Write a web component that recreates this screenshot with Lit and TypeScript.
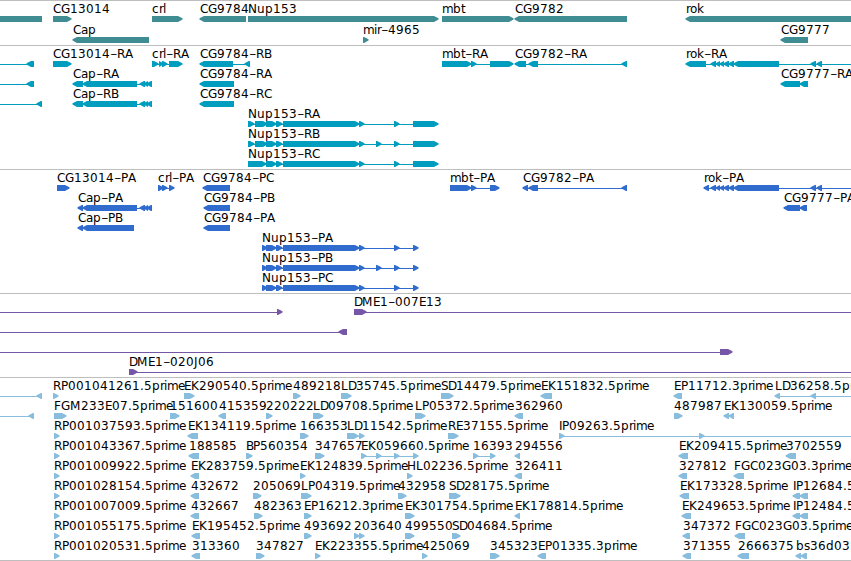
import { LitElement, html, svg, css } from 'lit';
import { customElement, property } from 'lit/decorators.js';

type Strand = '+' | '-';
type Block = [number, number];

interface Feature {
  label: string;
  strand: Strand;
  blocks: Block[];
  /** extent of the connecting line, when it runs past the outer blocks */
  line?: Block;
}

interface Track {
  name: string;
  rows: Feature[][];
}

const WIDTH = 851;
const EDGE = 860;
const HEAD = 5;

// Whole pixel advances for the 12px label font.
const ADVANCES: Record<string, number> = {
  A: 8, B: 7, C: 8, D: 8, E: 7, F: 7, G: 9, H: 9, I: 3, J: 4, K: 8, L: 7, M: 11, N: 9, P: 7, R: 8, S: 7,
  a: 7, b: 8, c: 7, d: 8, e: 7, i: 3, k: 7, l: 3, m: 11, o: 7, p: 8, r: 4, s: 6, t: 4, u: 8, '.': 4, '-': 7,
};

const fwd = (label: string, blocks: Block[], line?: Block): Feature => ({ label, strand: '+', blocks, line });
const rev = (label: string, blocks: Block[], line?: Block): Feature => ({ label, strand: '-', blocks, line });

const capTail: Block[] = [[140, 145], [144, 148], [147, 152]];
const rokMiddle: Block[] = [[711, 716], [716, 720], [720, 724], [724, 729], [729, 734], [734, 779], [811, 816], [817, 822]];
const nupMiddle: Block[] = [[266, 276], [276, 282], [283, 359], [359, 364]];

const tracks: Track[] = [
  {
    name: 'genes',
    rows: [
      [
        rev('', [[-10, 42]]),
        fwd('CG13014', [[53, 71]]),
        fwd('crl', [[152, 182]]),
        rev('CG9784', [[200, 246]]),
        fwd('Nup153', [[248, 438]]),
        fwd('mbt', [[442, 513]]),
        rev('CG9782', [[515, 627]]),
        rev('rok', [[686, EDGE]]),
      ],
      [rev('Cap', [[73, 149]]), fwd('mir-4965', [[363, 368]]), rev('CG9777', [[781, 808]])],
    ],
  },
  {
    name: 'transcripts',
    rows: [
      [
        rev('', [[27, 34]], [-10, 34]),
        fwd('CG13014-RA', [[53, 71]]),
        fwd('crl-RA', [[152, 158], [159, 163], [162, 167], [169, 182]]),
        rev('CG9784-RB', [[200, 233], [245, 250]]),
        fwd('mbt-RA', [[442, 471], [471, 476], [490, 513]]),
        rev('CG9782-RA', [[515, 526], [529, 538], [622, 627]]),
        rev('rok-RA', [[686, 706], ...rokMiddle], [686, EDGE]),
      ],
      [
        rev('', [[27, 34]], [-10, 34]),
        rev('Cap-RA', [[73, 83], [83, 137], ...capTail]),
        rev('CG9784-RA', [[200, 234]]),
        rev('CG9777-RA', [[781, 800], [800, 808]]),
      ],
      [
        rev('', [[37, 42]], [-10, 42]),
        rev('Cap-RB', [[73, 83], [83, 137], ...capTail]),
        rev('CG9784-RC', [[200, 234]]),
      ],
      [fwd('Nup153-RA', [[248, 254], [255, 267], ...nupMiddle, [394, 399], [413, 438]])],
      [fwd('Nup153-RB', [[248, 254], [255, 267], ...nupMiddle, [376, 381], [394, 399], [413, 438]])],
      [fwd('Nup153-RC', [[248, 266], ...nupMiddle, [394, 399], [413, 438]])],
    ],
  },
  {
    name: 'proteins',
    rows: [
      [
        fwd('CG13014-PA', [[57, 69]]),
        fwd('crl-PA', [[158, 163], [162, 167], [169, 174]]),
        rev('CG9784-PC', [[203, 230]]),
        fwd('mbt-PA', [[450, 471], [471, 476], [490, 499]]),
        rev('CG9782-PA', [[523, 528], [529, 538], [622, 627]]),
        rev('rok-PA', [[704, 709], ...rokMiddle], [704, EDGE]),
      ],
      [
        rev('Cap-PA', [[78, 83], [83, 137], ...capTail]),
        rev('CG9784-PB', [[204, 230]]),
        rev('CG9777-PA', [[784, 800], [800, 807]]),
      ],
      [rev('Cap-PB', [[78, 83], [83, 134]]), rev('CG9784-PA', [[204, 230]])],
      [fwd('Nup153-PA', [[262, 267], ...nupMiddle, [394, 399], [413, 418]])],
      [fwd('Nup153-PB', [[262, 267], ...nupMiddle, [376, 381], [394, 399], [413, 418]])],
      [fwd('Nup153-PC', [[262, 267], ...nupMiddle, [394, 399], [413, 418]])],
    ],
  },
  {
    name: 'bacs',
    rows: [
      [fwd('', [[277, 282]], [-10, 282]), fwd('DME1-007E13', [[354, 366]], [354, EDGE])],
      [rev('', [[339, 347]], [-10, 347])],
      [fwd('', [[720, 732]], [-10, 732])],
      [fwd('DME1-020J06', [[129, 137]], [129, EDGE])],
    ],
  },
  {
    name: 'ests',
    rows: [
      [
        rev('', [[37, 42]], [-10, 42]),
        fwd('RP001041261.5prime', [[53, 58]]),
        fwd('EK290540.5prime', [[184, 194]]),
        fwd('489218', [[293, 300]]),
        fwd('LD35745.5prime', [[341, 351]]),
        fwd('SD14479.5prime', [[441, 453]]),
        rev('EK151832.5prime', [[541, 552]]),
        rev('EP11712.3prime', [[674, 682]]),
        rev('LD36258.5prime', [[775, 780], [811, 816]], [775, EDGE]),
      ],
      [
        rev('', [[29, 34]], [-10, 34]),
        fwd('FGM233E07.5prime', [[54, 66]]),
        fwd('151600', [[170, 179]]),
        rev('415359', [[219, 226]]),
        fwd('220222', [[266, 272]]),
        fwd('LD09708.5prime', [[313, 323]]),
        fwd('LP05372.5prime', [[415, 425]]),
        rev('362960', [[515, 523]]),
        fwd('487987', [[674, 682]]),
        rev('EK130059.5prime', [[724, 729], [729, 734]]),
      ],
      [
        fwd('RP001037593.5prime', [[54, 59]]),
        rev('EK134119.5prime', [[188, 198]]),
        fwd('166353', [[300, 308]]),
        fwd('LD11542.5prime', [[347, 358], [359, 364]]),
        fwd('RE37155.5prime', [[448, 458]]),
        fwd('IP09263.5prime', [[559, 564], [699, 704]], [559, EDGE]),
      ],
      [
        fwd('RP001043367.5prime', [[54, 59]]),
        rev('188585', [[189, 199]]),
        fwd('BP560354', [[246, 252]]),
        fwd('347657', [[315, 324]]),
        fwd('EK059660.5prime', [[361, 366], [376, 381], [394, 399], [413, 418]]),
        fwd('16393', [[473, 478], [490, 495]]),
        rev('294556', [[515, 520]]),
        rev('EK209415.5prime', [[679, 688]]),
        rev('3702559', [[786, 796]]),
      ],
      [
        fwd('RP001009922.5prime', [[54, 59]]),
        rev('EK283759.5prime', [[191, 199]]),
        fwd('EK124839.5prime', [[300, 305]]),
        fwd('HL02236.5prime', [[407, 412]]),
        rev('326411', [[515, 522]]),
        rev('327812', [[679, 687]]),
        rev('FGC023G03.3prime', [[734, 744]]),
      ],
      [
        fwd('RP001028154.5prime', [[54, 59]]),
        rev('432672', [[191, 199]]),
        fwd('205069', [[253, 261]]),
        fwd('LP04319.5prime', [[301, 311]]),
        fwd('432958', [[398, 406]]),
        fwd('SD28175.5prime', [[449, 460]]),
        rev('EK173328.5prime', [[680, 689]]),
        rev('IP12684.5prime', [[793, 800], [800, 808]]),
      ],
      [
        fwd('RP001007009.5prime', [[54, 59]]),
        rev('432667', [[191, 199]]),
        fwd('482363', [[254, 262]]),
        fwd('EP16212.3prime', [[304, 311]]),
        fwd('EK301754.5prime', [[405, 414]]),
        rev('EK178814.5prime', [[515, 520]]),
        rev('EK249653.5prime', [[682, 691]]),
        rev('IP12484.5prime', [[793, 800], [800, 808]]),
      ],
      [
        fwd('RP001055175.5prime', [[54, 59]]),
        rev('EK195452.5prime', [[192, 200]]),
        fwd('493692', [[304, 311]]),
        fwd('203640', [[354, 359], [359, 364]]),
        fwd('499550', [[405, 414]]),
        fwd('SD04684.5prime', [[452, 460]]),
        rev('347372', [[683, 690]]),
        rev('FGC023G03.5prime', [[735, 745]]),
      ],
      [
        fwd('RP001020531.5prime', [[54, 59]]),
        rev('313360', [[192, 200]]),
        fwd('347827', [[256, 264]]),
        fwd('EK223355.5prime', [[315, 320]]),
        fwd('425069', [[422, 427]]),
        fwd('345323', [[490, 499]]),
        rev('EP01335.3prime', [[538, 546]]),
        rev('371355', [[683, 691]]),
        rev('2666375', [[738, 749]]),
        rev('bs36d03', [[796, 801], [801, 807]]),
      ],
    ],
  },
];

/**
 * One line of features, each with its label above the glyph
 *
 * @element feature-row
 */
@customElement('feature-row')
export class FeatureRow extends LitElement {
  @property({ attribute: false }) features: Feature[] = [];

  static styles = css`
    :host {
      display: block;
      height: 100%;
    }

    .row {
      display: block;
      overflow: visible;
    }

    .glyph {
      fill: currentColor;
    }

    .label {
      fill: #000;
      font-family: "DejaVu Sans", Verdana, sans-serif;
      font-size: 12px;
    }

    .hyphen {
      font-size: 21px;
      font-weight: 200;
    }
  `;

  _blockPath([start, end]: Block, strand: Strand) {
    // A block that reaches the left edge from outside has a flat end on both sides.
    if (start < 0) {
      return `M${start} 13H${end}V19H${start}Z`;
    }
    if (strand === '+') {
      return `M${start} 13H${end - HEAD + 1}L${end + 0.5} 15.3V16.5L${end - HEAD + 1} 19H${start}Z`;
    }
    return `M${end} 13H${start + HEAD - 1}L${start - 0.5} 15.3V16.5L${start + HEAD - 1} 19H${end}Z`;
  }

  _labelPositions(label: string, start: number) {
    let x = start;
    return [...label].map((char) => {
      const at = x;
      x += ADVANCES[char] ?? 8;
      return at;
    }).join(' ');
  }

  _renderLabel(label: string, start: number) {
    // The hyphen is set larger, so its baseline drops to keep it at mid height.
    const baselines = [...label].map((char) => (char === '-' ? 12 : 10)).join(' ');
    const parts = label.split('-');
    return svg`<text class="label" x=${this._labelPositions(label, start)} y=${baselines}>${parts.map(
      (part, i) => svg`${i > 0 ? svg`<tspan class="hyphen">-</tspan>` : ''}${part}`
    )}</text>`;
  }

  _renderFeature({ label, strand, blocks, line }: Feature) {
    const [from, to] = line ?? [blocks[0][0], blocks[blocks.length - 1][1]];
    const hasLine = line !== undefined || blocks.length > 1;
    return svg`
      <g class="glyph">
        ${hasLine ? svg`<rect x=${from} y="16" width=${to - from} height="1"></rect>` : ''}
        ${blocks.map((block) => svg`<path d=${this._blockPath(block, strand)}></path>`)}
      </g>
      ${label ? this._renderLabel(label, blocks[0][0]) : ''}
    `;
  }

  render() {
    return html`
      <svg class="row" width=${WIDTH} height="20">
        ${this.features.map((feature) => this._renderFeature(feature))}
      </svg>
    `;
  }
}

@customElement('app-root')
export class AppRoot extends LitElement {
  static styles = css`
    :host {
      display: block;
      width: 851px;
      height: 561px;
      overflow: hidden;
      background: #fff;
    }

    .track {
      display: grid;
      grid-auto-rows: 20px;
      padding: 2px 0 1px;
      border-top: 1px solid #bebebe;
    }

    .genes {
      grid-auto-rows: 21px;
      padding-bottom: 0;
      color: #408c93;
    }

    .transcripts {
      color: #009dbf;
    }

    .proteins {
      color: #306cce;
    }

    .bacs {
      color: #7656a7;
    }

    .ests {
      padding-bottom: 0;
      border-bottom: 1px solid #bebebe;
      color: #88bddd;
    }
  `;

  render() {
    return html`
      ${tracks.map((track) => html`
        <section class="track ${track.name}">
          ${track.rows.map((row) => html`<feature-row .features=${row}></feature-row>`)}
        </section>
      `)}
    `;
  }
}
